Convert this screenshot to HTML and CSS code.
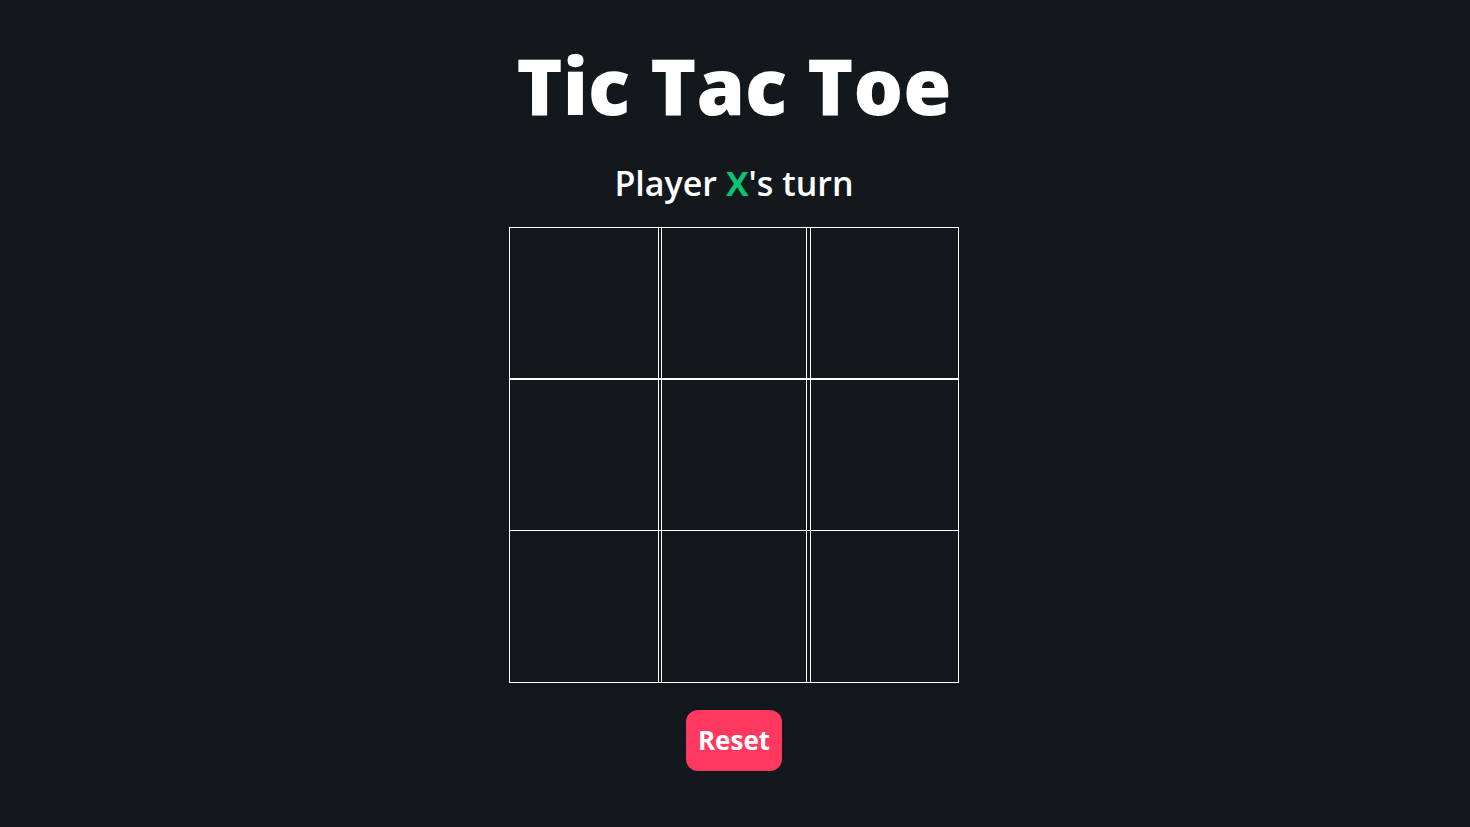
FILE: index.html
```
<!DOCTYPE html>
<html lang="en">
<head>
<meta charset="utf-8">
<title>Tic Tac Toe</title>
<link rel="stylesheet" href="styles.css">
</head>
<body>
<main class="game">
  <h1 class="title">Tic Tac Toe</h1>
  <p class="turn">Player <span class="player-x">X</span>'s turn</p>
  <section class="board" aria-label="Board">
    <div class="row">
      <button class="tile" type="button" aria-label="Tile 1"></button>
      <button class="tile" type="button" aria-label="Tile 2"></button>
      <button class="tile" type="button" aria-label="Tile 3"></button>
    </div>
    <div class="row">
      <button class="tile" type="button" aria-label="Tile 4"></button>
      <button class="tile" type="button" aria-label="Tile 5"></button>
      <button class="tile" type="button" aria-label="Tile 6"></button>
    </div>
    <div class="row">
      <button class="tile" type="button" aria-label="Tile 7"></button>
      <button class="tile" type="button" aria-label="Tile 8"></button>
      <button class="tile" type="button" aria-label="Tile 9"></button>
    </div>
  </section>
  <button class="reset" type="button">Reset</button>
</main>
</body>
</html>
```
FILE: styles.css
```
* {
  box-sizing: border-box;
}

body {
  margin: 0;
  background: #12181b;
  color: #fff;
  font-family: "Open Sans", "Noto Sans", sans-serif;
}

.game {
  display: flex;
  flex-direction: column;
  align-items: center;
  padding: 36px 2px 36px 0;
}

.title {
  margin: 0;
  font-size: 78px;
  line-height: 98px;
  font-weight: 800;
}

.turn {
  margin: 24px 0 18px;
  font-size: 34px;
  line-height: 51px;
  font-weight: 600;
}

.player-x {
  color: #09c372;
  font-weight: 700;
}

.row {
  display: grid;
  grid-template-columns: 150px 147px 149px;
  grid-template-rows: 150px;
  column-gap: 2px;
  border: solid #fff;
  border-width: 1px 0;
}

.row:last-child {
  border-top: 0;
  grid-template-rows: 151px;
}

.tile {
  padding: 0;
  border: solid #fff;
  border-width: 0 1px;
  border-radius: 0;
  background: transparent;
  cursor: pointer;
}

.tile:nth-child(2) {
  margin-right: 1px;
}

.reset {
  margin-top: 27px;
  padding: 12px;
  border: 0;
  border-radius: 12px;
  background: #ff3860;
  color: #fff;
  font-family: inherit;
  font-size: 26px;
  line-height: 37px;
  font-weight: 700;
  cursor: pointer;
}
```
